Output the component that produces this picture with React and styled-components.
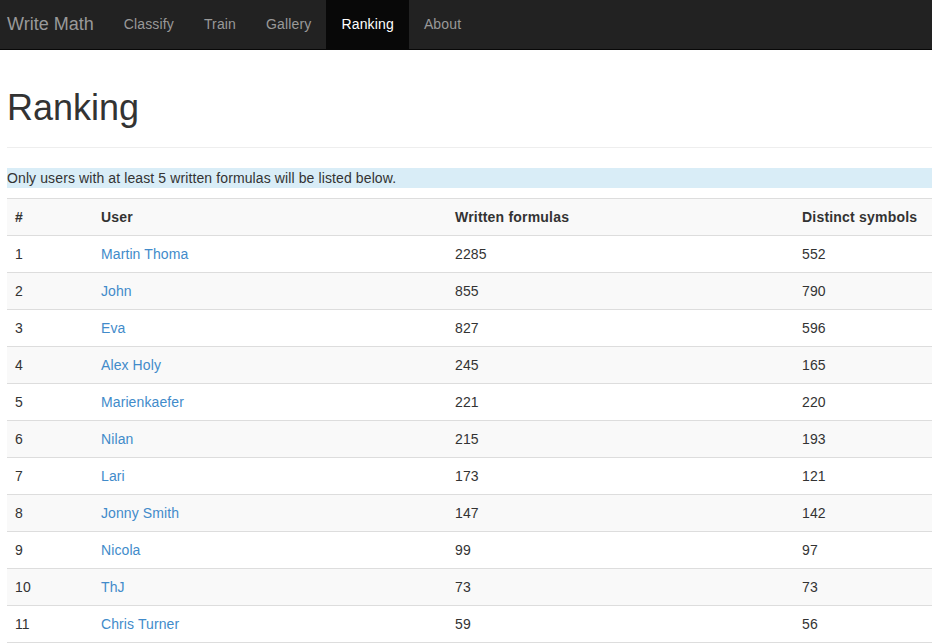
import React from "react";
import styled, { createGlobalStyle } from "styled-components";

const GlobalStyle = createGlobalStyle`
  html, body {
    margin: 0;
    padding: 0;
    background: #fff;
  }
  body {
    font-family: "Liberation Sans", Arial, Helvetica, sans-serif;
    font-size: 14px;
    line-height: 20px;
    color: #333;
  }
  * {
    box-sizing: border-box;
  }
`;

const rows = [
  [1, "Martin Thoma", 2285, 552],
  [2, "John", 855, 790],
  [3, "Eva", 827, 596],
  [4, "Alex Holy", 245, 165],
  [5, "Marienkaefer", 221, 220],
  [6, "Nilan", 215, 193],
  [7, "Lari", 173, 121],
  [8, "Jonny Smith", 147, 142],
  [9, "Nicola", 99, 97],
  [10, "ThJ", 73, 73],
  [11, "Chris Turner", 59, 56]
];

const navItems = ["Classify", "Train", "Gallery", "Ranking", "About"];

const App = () => {
  return (
    <>
      <GlobalStyle />
      <Navbar>
        <Brand href="#">Write Math</Brand>
        <NavList>
          {navItems.map(item => (
            <NavItem key={item} active={item === "Ranking"}>
              <NavLink href="#" active={item === "Ranking"}>
                {item}
              </NavLink>
            </NavItem>
          ))}
        </NavList>
      </Navbar>
      <Container>
        <PageHeader>
          <Title>Ranking</Title>
        </PageHeader>
        <Info>Only users with at least 5 written formulas will be listed below.</Info>
        <Table>
          <colgroup>
            <col style={{ width: 86 }} />
            <col style={{ width: 354 }} />
            <col style={{ width: 347 }} />
            <col style={{ width: 138 }} />
          </colgroup>
          <thead>
            <HeadRow>
              <Th>#</Th>
              <Th>User</Th>
              <Th>Written formulas</Th>
              <Th>Distinct symbols</Th>
            </HeadRow>
          </thead>
          <tbody>
            {rows.map(r => (
              <Row key={r[0]}>
                <Td>{r[0]}</Td>
                <Td>
                  <UserLink href="#">{r[1]}</UserLink>
                </Td>
                <Td>{r[2]}</Td>
                <Td>{r[3]}</Td>
              </Row>
            ))}
          </tbody>
        </Table>
      </Container>
    </>
  );
};

export default App;

const Navbar = styled.nav`
  display: flex;
  align-items: stretch;
  height: 50px;
  background: #222;
  border-bottom: 1px solid #080808;
`;

const Brand = styled.a`
  display: block;
  padding: 14px 15px 0 7px;
  font-size: 18px;
  line-height: 20px;
  color: #999;
  text-decoration: none;
`;

const NavList = styled.ul`
  display: flex;
  list-style: none;
  margin: 0;
  padding: 0;
`;

const NavItem = styled.li`
  display: flex;
  background: ${p => (p.active ? "#080808" : "transparent")};
`;

const NavLink = styled.a`
  display: block;
  padding: 14px 15px 0;
  font-size: 14px;
  line-height: 20px;
  letter-spacing: 0.15px;
  color: ${p => (p.active ? "#fff" : "#999")};
  text-decoration: none;
`;

const Container = styled.div`
  padding: 0 0 0 7px;
`;

const PageHeader = styled.div`
  margin: 38px 0 20px;
  padding-bottom: 9px;
  border-bottom: 1px solid #eee;
`;

const Title = styled.h1`
  margin: 0 0 10px;
  font-size: 36px;
  font-weight: 500;
  line-height: 1.1;
  color: #333;
`;

const Info = styled.p`
  margin: 0 0 10px;
  background: #d9edf7;
  line-height: 20px;
  letter-spacing: 0.11px;
`;

const Table = styled.table`
  width: 925px;
  border-collapse: collapse;
  border-spacing: 0;
  table-layout: fixed;
  letter-spacing: 0.1px;
`;

const HeadRow = styled.tr`
  background: #f9f9f9;
`;

const Th = styled.th`
  padding: 8px;
  text-align: left;
  font-weight: bold;
  line-height: 20px;
  letter-spacing: 0.2px;
  border-top: 1px solid #ddd;
  border-bottom: 1px solid #ddd;
`;

const Row = styled.tr`
  &:nth-child(even) {
    background: #f9f9f9;
  }
`;

const Td = styled.td`
  padding: 8px;
  line-height: 20px;
  border-top: 1px solid #ddd;
  border-bottom: 1px solid #ddd;
  vertical-align: top;
`;

const UserLink = styled.a`
  color: #428bca;
  text-decoration: none;
`;
